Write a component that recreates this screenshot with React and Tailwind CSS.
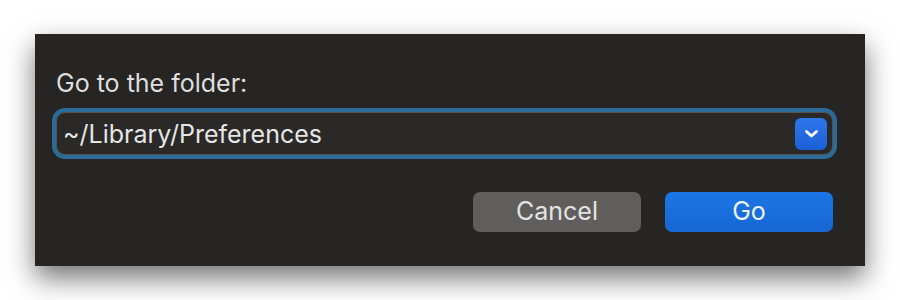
import React, { useState } from 'react';

function Chevron() {
  return (
    <svg width="15" height="10" viewBox="0 0 15 10" fill="none">
      <path d="M2.5 2.5l5 4.5 5-4.5" stroke="white" strokeWidth="2.8" strokeLinecap="round" strokeLinejoin="round" />
    </svg>
  );
}

export default function App() {
  const [path, setPath] = useState('~/Library/Preferences');

  return (
    <div className="w-[900px] h-[300px] bg-white pt-[34px] pl-[35px] font-['Inter','Liberation_Sans',sans-serif]">
      <div className="w-[830px] h-[232px] bg-[#262524] pl-[21px] pr-[32px] pt-[34px] flex flex-col shadow-[0_12px_26px_rgba(0,0,0,0.55)]">
        <div className="text-[25px] leading-[30px] text-[#dfdedd] h-[44px]">Go to the folder:</div>
        <div className="flex items-center h-[43px] rounded-[9px] bg-[#2a2928] border border-[#55534f] shadow-[0_0_0_4px_#2c6a9a] pl-[6px] pr-[5px]">
          <input
            value={path}
            onChange={(e) => setPath(e.target.value)}
            className="flex-1 bg-transparent outline-none text-[25px] leading-[30px] text-[#e6e5e4]"
          />
          <button className="w-[32px] h-[32px] rounded-[6px] bg-gradient-to-b from-[#2f76ec] to-[#1b5fd6] flex items-center justify-center">
            <Chevron />
          </button>
        </div>
        <div className="flex justify-end gap-[24px] mt-[37px]">
          <button className="w-[168px] h-[40px] rounded-[7px] bg-[#5f5e5d] text-[25px] text-[#e4e3e2]">Cancel</button>
          <button className="w-[168px] h-[40px] rounded-[7px] bg-gradient-to-b from-[#1c76e6] to-[#1766d3] text-[25px] text-[#eef3fb]">Go</button>
        </div>
      </div>
    </div>
  );
}
